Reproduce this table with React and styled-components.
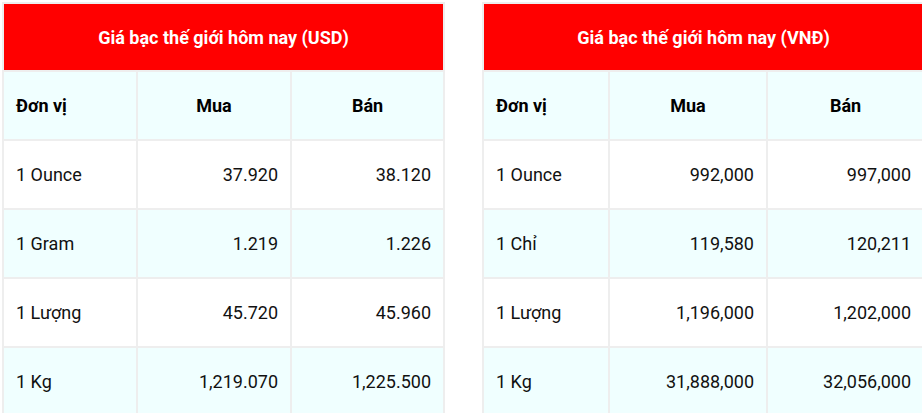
import React from 'react';
import styled, { createGlobalStyle } from 'styled-components';

const tables = [
  {
    title: 'Giá bạc thế giới hôm nay (USD)',
    cols: [134, 154, 153],
    rows: [
      ['1 Ounce', '37.920', '38.120'],
      ['1 Gram', '1.219', '1.226'],
      ['1 Lượng', '45.720', '45.960'],
      ['1 Kg', '1,219.070', '1,225.500'],
    ],
  },
  {
    title: 'Giá bạc thế giới hôm nay (VNĐ)',
    cols: [126, 158, 157],
    rows: [
      ['1 Ounce', '992,000', '997,000'],
      ['1 Chỉ', '119,580', '120,211'],
      ['1 Lượng', '1,196,000', '1,202,000'],
      ['1 Kg', '31,888,000', '32,056,000'],
    ],
  },
];

export default function App() {
  return (
    <Page>
      <GlobalStyles />
      {tables.map((t) => (
        <Table key={t.title}>
          <colgroup>
            {t.cols.map((w, i) => (
              <col key={i} style={{ width: w }} />
            ))}
          </colgroup>
          <thead>
            <tr>
              <Title colSpan={3}>{t.title}</Title>
            </tr>
            <Row $alt>
              <Head>Đơn vị</Head>
              <Head $center>Mua</Head>
              <Head $center>Bán</Head>
            </Row>
          </thead>
          <tbody>
            {t.rows.map((r, i) => (
              <Row key={r[0]} $alt={i % 2 === 1}>
                <Cell>{r[0]}</Cell>
                <Cell $right>{r[1]}</Cell>
                <Cell $right>{r[2]}</Cell>
              </Row>
            ))}
          </tbody>
        </Table>
      ))}
    </Page>
  );
}

const Page = styled.div`
  display: flex;
  gap: 37px;
  padding: 2px 0 0 2px;
  width: 922px;
  height: 413px;
  overflow: hidden;
  box-sizing: border-box;
`;

const Table = styled.table`
  flex: none;
  width: 443px;
  border-collapse: collapse;
  table-layout: fixed;
  font-family: Roboto, 'Noto Sans', sans-serif;
  font-size: 18px;
  color: #111;
`;

const Title = styled.th`
  height: 66px;
  padding: 0;
  background: #ff0000;
  color: #fff;
  font-weight: 700;
  font-size: 18px;
  text-align: center;
  border: 2px solid #eee;
`;

const Row = styled.tr`
  height: 69px;
  background: ${(p) => (p.$alt ? '#f0ffff' : '#fff')};
`;

const Head = styled.th`
  padding: 0 12px;
  font-weight: 700;
  color: #000;
  text-align: ${(p) => (p.$center ? 'center' : 'left')};
  border: 2px solid #eee;
`;

const Cell = styled.td`
  padding: 0 12px;
  text-align: ${(p) => (p.$right ? 'right' : 'left')};
  border: 2px solid #eee;
`;

const GlobalStyles = createGlobalStyle`
  html, body {
    margin: 0;
    padding: 0;
    background: #fff;
  }
`;
